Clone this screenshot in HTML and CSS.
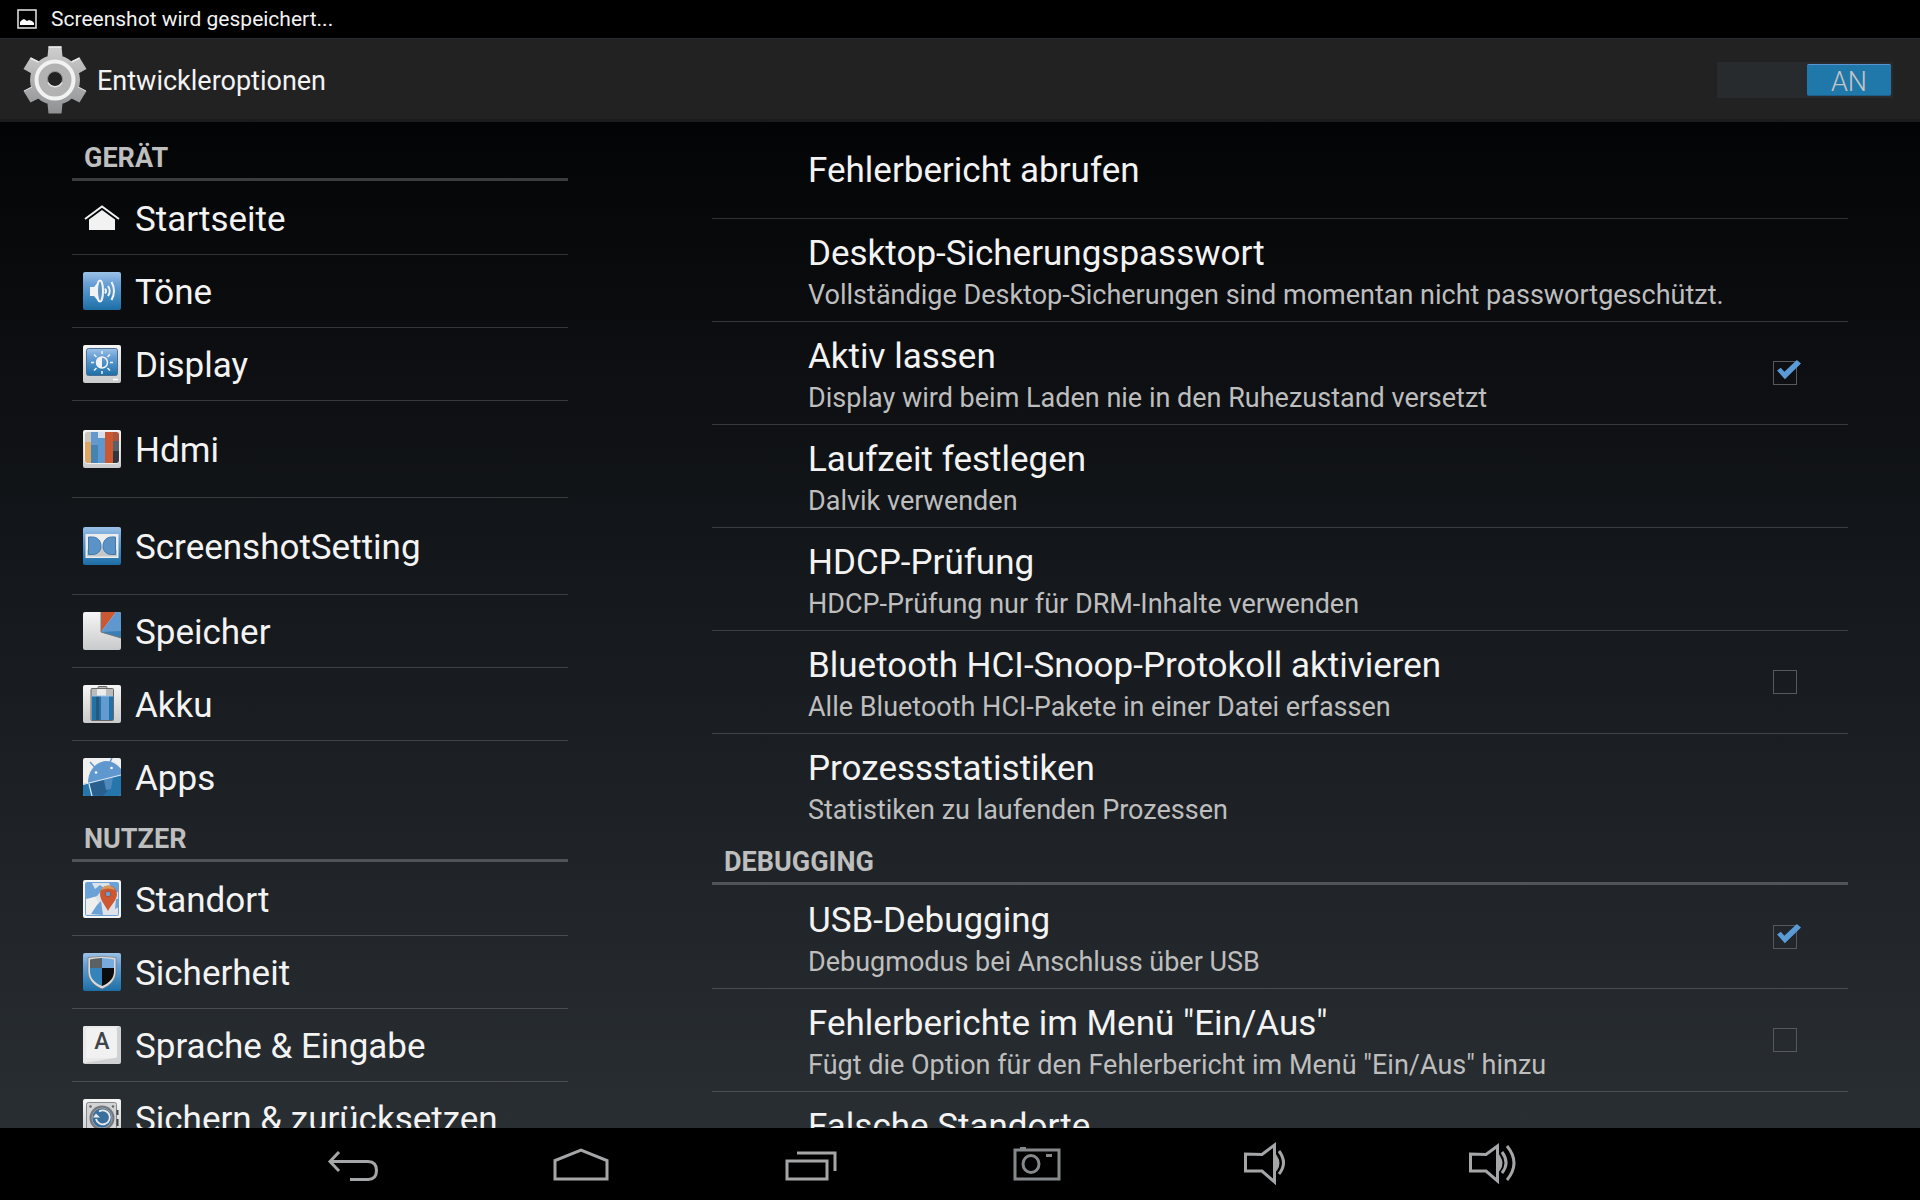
FILE: index.html
```html
<!DOCTYPE html>
<html lang="de">
  <head>
    <meta charset="UTF-8" />
    <meta name="viewport" content="width=device-width, initial-scale=1.0" />
    <title>Entwickleroptionen</title>
    <link rel="stylesheet" href="styles.css" />
  </head>
  <body>
    <!-- Status bar -->
    <div class="status-bar">
      <svg class="status-icon" viewBox="0 0 20 20" aria-hidden="true">
        <rect x="1" y="1" width="18" height="18" fill="none" stroke="#e8e8e8" stroke-width="1.5" />
        <path d="M3 16v-3l2-2 2-1 3 2 2-1 3 1 2 2v2z" fill="#fff" />
      </svg>
      <span>Screenshot wird gespeichert...</span>
    </div>

    <!-- Action bar -->
    <header class="action-bar">
      <svg class="gear" viewBox="0 0 64 68" aria-hidden="true">
        <defs>
          <linearGradient id="gearFill" x1="0" y1="0" x2="0" y2="68" gradientUnits="userSpaceOnUse">
            <stop offset="0" stop-color="#d0d0d0" />
            <stop offset="1" stop-color="#8f9092" />
          </linearGradient>
        </defs>
        <g fill="url(#gearFill)">
          <path d="M25.500 0.500h13l1 10h-15z" />
          <path d="M24.500 57.500h15l-1 10h-13z" />
          <path d="M56.500 11.500l7 11.500-9 5-7-12z" />
          <path d="M7.500 11.500l-7 11.500 9 5 7-12z" />
          <path d="M56.500 56.500l7-11.500-9-5-7 12z" />
          <path d="M7.500 56.500l-7-11.500 9-5 7 12z" />
          <circle cx="32" cy="34" r="25" />
        </g>
        <path d="M25.500 1h13M7.500 12l8 4M56.500 12l-8 4" stroke="#ececec" stroke-width="1.500" />
        <path d="M1 45l8-4M63 45l-8-4" stroke="#dcdcdc" />
        <circle cx="32" cy="34" r="18.500" fill="#b2b2b3" stroke="#f2f2f2" stroke-width="4" />
        <circle cx="32" cy="33" r="7.500" fill="#222" stroke="#8e9092" />
        <path d="M25 36.500a8 8 0 0 0 14 0" fill="none" stroke="#e6e6e6" stroke-width="1.500" />
      </svg>
      <h1>Entwickleroptionen</h1>
      <label class="switch">
        <input type="checkbox" role="switch" aria-label="Entwickleroptionen" checked />
        <span class="thumb">AN</span>
      </label>
    </header>

    <main class="content">
      <nav class="sidebar" aria-label="Einstellungen">
        <h2>GERÄT</h2>
        <ul>
          <li>
            <a href="#startseite">
              <svg viewBox="0 0 38 38" aria-hidden="true">
                <path d="M2 20L19 7.500 36 20" fill="none" stroke="#f2f2f2" stroke-width="2" />
                <path d="M6 20.500L19 11l13 9.500V31H6z" fill="#f2f2f2" />
              </svg>
              Startseite
            </a>
          </li>
          <li>
            <a href="#toene">
              <svg viewBox="0 0 38 38" aria-hidden="true">
                <defs>
                  <linearGradient id="blue" x1="0" y1="0" x2="0" y2="1">
                    <stop offset="0" stop-color="#9cc2e6" />
                    <stop offset="0.300" stop-color="#6aa0d6" />
                    <stop offset="0.700" stop-color="#3a86bd" />
                    <stop offset="1" stop-color="#1d6ea5" />
                  </linearGradient>
                  <linearGradient id="white" x1="0" y1="0" x2="0" y2="1">
                    <stop offset="0" stop-color="#f6f6f6" />
                    <stop offset="1" stop-color="#c9cacb" />
                  </linearGradient>
                </defs>
                <rect width="38" height="38" rx="2" fill="url(#blue)" />
                <path d="M7 15h4l5-6v21l-5-6H7z" fill="#f2f2f2" />
                <ellipse cx="17" cy="19" rx="3" ry="10.500" fill="#5b93c4" stroke="#f2f2f2" stroke-width="2" />
                <path d="M22 16.500q2 2.500 0 5M25 14q3.500 5 0 10M28.500 10q5 9 0 18" fill="none" stroke="#f2f2f2" stroke-width="2" />
              </svg>
              Töne
            </a>
          </li>
          <li>
            <a href="#display">
              <svg viewBox="0 0 38 38" aria-hidden="true">
                <rect width="38" height="38" rx="2" fill="url(#white)" />
                <rect x="3.500" y="3.500" width="31" height="27" rx="2" fill="url(#blue)" stroke="#4b6f90" />
                <circle cx="19" cy="17.500" r="5.500" fill="none" stroke="#f2f2f2" stroke-width="1.500" />
                <path d="M19 12a5.500 5.500 0 0 0 0 11z" fill="#f2f2f2" />
                <path d="M19 6v3M19 26v3M8 17.500h3M27 17.500h3M11 9.500l2.500 2.500M27 9.500L24.500 12M11 25.500l2.500-2.500M27 25.500L24.500 23" stroke="#f2f2f2" stroke-width="1.500" />
                <path d="M30 34.500h5" stroke="#fff" stroke-width="1.500" />
              </svg>
              Display
            </a>
          </li>
          <li class="tall">
            <a href="#hdmi">
              <svg viewBox="0 0 38 38" aria-hidden="true">
                <rect width="38" height="38" rx="2" fill="url(#white)" />
                <path d="M2 2h6v31H2z" fill="#dca562" />
                <path d="M2 2h6v10H2z" fill="#c9c6c0" />
                <path d="M8 2h7v31H8z" fill="#4583b3" />
                <path d="M8 2h7v13H8z" fill="#6399cc" />
                <path d="M15 2h7v31h-7z" fill="#5f98ce" />
                <path d="M15 2h7v6h-7z" fill="#d5e2ee" />
                <path d="M22 2h8v31h-8z" fill="#cc5833" />
                <path d="M30 2h6v31h-6z" fill="#30363c" />
                <path d="M30 2h6v9h-6z" fill="#a9563c" />
                <path d="M30 11h6v10h-6z" fill="#5a6068" />
                <rect x="1.500" y="1.500" width="35" height="32" rx="3" fill="none" stroke="#ededed" />
              </svg>
              Hdmi
            </a>
          </li>
          <li class="tall">
            <a href="#screenshot">
              <svg viewBox="0 0 38 38" aria-hidden="true">
                <rect width="38" height="38" rx="2" fill="url(#blue)" />
                <rect x="2.500" y="7" width="33" height="24" fill="#ededed" />
                <path d="M4 23l15-3 15 3v6.500H4z" fill="#c5c8cb" />
                <path d="M5.500 10h4c5 0 8.500 4 8.500 9s-3.500 8.500-8.500 8.500h-4z" fill="#5b93c9" stroke="#4078a8" />
                <path d="M32.500 10h-4c-5 0-8.500 4-8.500 9s3.500 8.500 8.500 8.500h4z" fill="#5b93c9" stroke="#4078a8" />
              </svg>
              ScreenshotSetting
            </a>
          </li>
          <li>
            <a href="#speicher">
              <svg viewBox="0 0 38 38" aria-hidden="true">
                <rect width="38" height="38" rx="2" fill="url(#white)" />
                <path d="M18 20V0h15z" fill="#cc5833" />
                <path d="M18 20L33 0h3q2 0 2 2v24z" fill="#5f97cf" />
                <path d="M18 20l20-1v7z" fill="#397fb5" />
                <path d="M18 0v20l20 6" fill="none" stroke="#777" />
              </svg>
              Speicher
            </a>
          </li>
          <li>
            <a href="#akku">
              <svg viewBox="0 0 38 38" aria-hidden="true">
                <rect width="38" height="38" rx="2" fill="url(#white)" />
                <rect x="15" y="1.500" width="9" height="3" rx="1" fill="#bbb" stroke="#666" />
                <rect x="8" y="3.500" width="22.500" height="32" rx="1" fill="#b9bbbd" stroke="#666" />
                <path d="M14 4h9v7h-9z" fill="#ececec" />
                <path d="M9 11h21v24H9z" fill="#2073a8" />
                <path d="M13 11h3v24h-3z" fill="#28567c" />
                <path d="M18 11h8v24h-8z" fill="#639bd0" />
                <path d="M9 11h21" stroke="#9cc2e6" />
              </svg>
              Akku
            </a>
          </li>
          <li>
            <a href="#apps">
              <svg viewBox="0 0 38 38" aria-hidden="true">
                <rect width="38" height="38" rx="2" fill="#f0f0f0" />
                <path d="M5 25C5 12 13 4 23 3c6 0 11 3 15 8v8z" fill="#5f97cf" />
                <path d="M0 26l6-1L38 17v19q0 2-2 2H2q-2 0-2-2z" fill="#2676ae" />
                <path d="M9 37L6 26l14-4 6 9-6 7z" fill="#295f8c" />
                <path d="M21 22l9-3-2 12-5 1z" fill="#5089bd" />
                <path d="M11.500 9L7 4M27 4l2-4" stroke="#5f97cf" stroke-width="1.500" />
                <path d="M0 26.500L38 17M6 26l3 12" stroke="#dfeaf5" stroke-width="1.200" />
                <circle cx="13" cy="14.500" r="1.300" fill="#fff" />
                <circle cx="28.500" cy="10" r="1.300" fill="#fff" />
              </svg>
              Apps
            </a>
          </li>
        </ul>

        <h2>NUTZER</h2>
        <ul>
          <li>
            <a href="#standort">
              <svg viewBox="0 0 38 38" aria-hidden="true">
                <rect width="38" height="38" rx="2" fill="#f4f4f4" />
                <rect x="2.500" y="2.500" width="33" height="33" rx="1" fill="#dde3e9" stroke="#6aa2d8" />
                <path d="M3 3h6l3 6 5-4 4 3-7 8-6 2-5 4z" fill="#6aa2d8" />
                <path d="M3 19l9-2 4 7-7 10H3z" fill="#eeeeee" />
                <path d="M8 34l6-9 4-4 2 14zM26 3h9v9h-5zM33 19h3v8l-4 2z" fill="#6aa2d8" />
                <path d="M25 31c3-6 9-11 9-17a8.500 8.500 0 0 0-17 0c0 6 5 11 8 17z" fill="#cc5833" />
                <path d="M18 10a8 8 0 0 1 14 0q-7-3-14 0z" fill="#d89a58" />
                <circle cx="25" cy="14" r="2.800" fill="#6aa2d8" stroke="#a84d30" />
              </svg>
              Standort
            </a>
          </li>
          <li>
            <a href="#sicherheit">
              <svg viewBox="0 0 38 38" aria-hidden="true">
                <rect width="38" height="38" rx="2" fill="url(#blue)" />
                <path d="M5 4.500q14-2.500 28 0v14C33 27 27 32.500 19 36 11 32.500 5 27 5 18.500z" fill="#dadada" stroke="#6f7478" stroke-width="0.700" />
                <path d="M7 6.500q6-1.500 12-1.500v10H7z" fill="#5b6063" />
                <path d="M31 6.500Q25 5 19 5v10h12z" fill="#77abdf" />
                <path d="M7 15h12v18C11 29.500 7 25 7 18z" fill="#3583bb" />
                <path d="M31 15H19v18c8-3.500 12-8 12-15z" fill="#0b0c0d" />
              </svg>
              Sicherheit
            </a>
          </li>
          <li>
            <a href="#sprache">
              <svg viewBox="0 0 38 38" aria-hidden="true">
                <rect width="38" height="38" rx="2" fill="#d0d1d2" />
                <path d="M0 2q0-2 2-2h34l-4 4v28L1 37q-1 0-1-1z" fill="#e9e9e9" />
                <rect x="3" y="2" width="31" height="30" rx="2" fill="#f1f1f1" />
                <text class="key" x="19" y="23" text-anchor="middle">A</text>
              </svg>
              Sprache &amp; Eingabe
            </a>
          </li>
          <li>
            <a href="#sichern">
              <svg viewBox="0 0 38 38" aria-hidden="true">
                <rect width="38" height="38" rx="2" fill="url(#white)" />
                <rect x="3.500" y="3.500" width="30" height="31" rx="2" fill="#d2d3d4" stroke="#85888b" />
                <circle cx="7.500" cy="7.500" r="1.300" fill="#666" />
                <circle cx="30" cy="7.500" r="1.300" fill="#666" />
                <circle cx="19" cy="19" r="12.500" fill="#74787c" />
                <circle cx="19" cy="19" r="10" fill="#396f9c" stroke="#9aa0a5" />
                <path d="M13 20a7 7 0 1 0 3-7.500" fill="none" stroke="#ececec" stroke-width="1.800" />
                <path d="M10 18.500l3-4 4 4z" fill="#ececec" />
                <path d="M34.500 11v5M34.500 20v7" stroke="#444" stroke-width="2" />
              </svg>
              Sichern &amp; zurücksetzen
            </a>
          </li>
        </ul>
      </nav>

      <section class="options">
        <ul>
          <li><a class="single" href="#fehlerbericht"><span class="title">Fehlerbericht abrufen</span></a></li>
          <li>
            <a href="#passwort">
              <span class="title">Desktop-Sicherungspasswort</span>
              <span class="summary">Vollständige Desktop-Sicherungen sind momentan nicht passwortgeschützt.</span>
            </a>
          </li>
          <li class="check-row">
            <label for="awake">
              <span class="title">Aktiv lassen</span>
              <span class="summary">Display wird beim Laden nie in den Ruhezustand versetzt</span>
            </label>
            <input type="checkbox" id="awake" checked />
          </li>
          <li>
            <a href="#laufzeit">
              <span class="title">Laufzeit festlegen</span>
              <span class="summary">Dalvik verwenden</span>
            </a>
          </li>
          <li>
            <a href="#hdcp">
              <span class="title">HDCP-Prüfung</span>
              <span class="summary">HDCP-Prüfung nur für DRM-Inhalte verwenden</span>
            </a>
          </li>
          <li class="check-row">
            <label for="snoop">
              <span class="title">Bluetooth HCI-Snoop-Protokoll aktivieren</span>
              <span class="summary">Alle Bluetooth HCI-Pakete in einer Datei erfassen</span>
            </label>
            <input type="checkbox" id="snoop" />
          </li>
          <li>
            <a href="#prozesse">
              <span class="title">Prozessstatistiken</span>
              <span class="summary">Statistiken zu laufenden Prozessen</span>
            </a>
          </li>
        </ul>

        <h2>DEBUGGING</h2>
        <ul>
          <li class="check-row">
            <label for="usb">
              <span class="title">USB-Debugging</span>
              <span class="summary">Debugmodus bei Anschluss über USB</span>
            </label>
            <input type="checkbox" id="usb" checked />
          </li>
          <li class="check-row">
            <label for="power">
              <span class="title">Fehlerberichte im Menü "Ein/Aus"</span>
              <span class="summary">Fügt die Option für den Fehlerbericht im Menü "Ein/Aus" hinzu</span>
            </label>
            <input type="checkbox" id="power" />
          </li>
          <li><a href="#standorte"><span class="title">Falsche Standorte</span></a></li>
        </ul>
      </section>
    </main>

    <!-- System buttons -->
    <footer class="nav-bar">
      <button type="button" aria-label="Zurück">
        <svg viewBox="0 0 60 48">
          <path d="M16 11L7 20.500 16 30M7 20.500h38q8.500 0 8.500 9T45 38.500H27" />
        </svg>
      </button>
      <button type="button" aria-label="Startbildschirm">
        <svg viewBox="0 0 60 48">
          <path d="M4 38V19.500L30 9l26 10.500V38z" />
        </svg>
      </button>
      <button type="button" aria-label="Letzte Apps">
        <svg viewBox="0 0 60 48">
          <path d="M8 20h40v18H8zM18 12h38v18" />
        </svg>
      </button>
      <button type="button" aria-label="Screenshot">
        <svg class="dim" viewBox="0 0 60 48">
          <path d="M8 9h44v29H8zM13 7.500h6M39 14.500h6" />
          <ellipse cx="24" cy="23" rx="8" ry="8.500" />
        </svg>
      </button>
      <button type="button" aria-label="Leiser">
        <svg viewBox="0 0 60 48">
          <path d="M10.500 13v17H27l12.500 11V4L27 13.500z" />
          <path d="M41 16q4 6.500 0 12zM44 10q9 12 0 23" />
        </svg>
      </button>
      <button type="button" aria-label="Lauter">
        <svg viewBox="0 0 60 48">
          <path d="M7.500 13v17H23l11.500 10V5L23 13.500z" />
          <path d="M36 16q4 6.500 0 12zM39 11q8 11 0 21M44 5q14 17 0 34" />
        </svg>
      </button>
    </footer>
  </body>
</html>
```
FILE: styles.css
```css
* {
  margin: 0;
  padding: 0;
  box-sizing: border-box;
}

body {
  display: flex;
  flex-direction: column;
  height: 100vh;
  overflow: hidden;
  background: #000;
  color: #f3f3f3;
  font-family: Roboto, sans-serif;
}

a {
  color: inherit;
  text-decoration: none;
}

ul {
  list-style: none;
}

/* Status bar */
.status-bar {
  display: flex;
  align-items: center;
  gap: 14px;
  height: 38px;
  padding-left: 17px;
  font-size: 21px;
}

.status-icon {
  width: 20px;
  height: 20px;
}

/* Action bar */
.action-bar {
  display: flex;
  align-items: center;
  height: 84px;
  padding: 2px 27px 0 23px;
  background: #222;
  border-top: 1px solid #272c30;
  border-bottom: 3px solid #1a1c1e;
}

.gear {
  width: 64px;
  height: 68px;
}

.action-bar h1 {
  margin-left: 10px;
  padding-top: 2px;
  font-size: 27px;
  font-weight: 400;
}

.switch {
  display: flex;
  justify-content: flex-end;
  position: relative;
  width: 176px;
  height: 36px;
  margin-left: auto;
  padding: 2px;
  background: #282b2e;
  cursor: pointer;
}

.switch input {
  position: absolute;
  inset: 0;
  opacity: 0;
}

.thumb {
  width: 84px;
  border-top: 1px solid #5b93cf;
  border-bottom: 1px solid #1c5f88;
  border-radius: 2px;
  background: #2077aa;
  color: #c4c4c4;
  font-size: 27px;
  font-weight: 300;
  line-height: 34px;
  text-align: center;
}

/* Two panes */
.content {
  display: flex;
  flex: 1;
  gap: 144px;
  min-height: 0;
  padding: 0 72px;
  overflow: hidden;
  background: linear-gradient(#030405, #0d0f12 25%, #181c20 55%, #292e32);
}

h2 {
  height: 48px;
  padding-left: 12px;
  border-bottom: 3px solid rgba(255, 255, 255, 0.22);
  margin-bottom: 1px;
  color: #bebebe;
  font-size: 27px;
  font-weight: 700;
  line-height: 51px;
}

.content li {
  border-bottom: 1px solid rgba(255, 255, 255, 0.17);
}

.content li:last-child {
  border-bottom-color: transparent;
}

.sidebar {
  flex: 0 0 496px;
  padding-top: 11px;
}

.sidebar a {
  display: flex;
  align-items: center;
  gap: 14px;
  height: 72px;
  padding: 2px 0 0 11px;
  font-size: 35px;
  white-space: nowrap;
}

.sidebar .tall a {
  height: 96px;
}

.sidebar svg {
  flex: none;
  width: 38px;
  height: 38px;
  margin-bottom: 2px;
}

.key {
  fill: #3f444a;
  font-size: 23px;
  font-weight: 500;
}

.options {
  flex: 1;
}

.options a,
.options label {
  display: block;
  flex: 1;
  height: 102px;
  padding: 14px 0 0 96px;
}

.options a.single {
  height: 96px;
  padding-top: 28px;
}

.title {
  display: block;
  font-size: 35px;
  line-height: 42px;
}

.summary {
  display: block;
  color: #bebebe;
  font-size: 27px;
  line-height: 40px;
}

.check-row {
  display: flex;
  align-items: center;
  padding-right: 51px;
}

.check-row input {
  appearance: none;
  position: relative;
  width: 24px;
  height: 24px;
  border: 1px solid #55595c;
}

.check-row input:checked::after {
  content: "";
  position: absolute;
  right: -5px;
  top: -3px;
  width: 26px;
  height: 22px;
  background: #5a9bd5;
  clip-path: polygon(8% 52%, 22% 40%, 36% 58%, 84% 4%, 100% 20%, 38% 92%);
}

/* System buttons */
.nav-bar {
  display: flex;
  height: 72px;
  padding: 2px 313px 0 239px;
  background: #000;
}

.nav-bar button {
  display: flex;
  flex: 1;
  align-items: center;
  justify-content: center;
  border: none;
  background: none;
}

.nav-bar svg {
  width: 60px;
  height: 48px;
  fill: none;
  stroke: #a5a6a8;
  stroke-width: 3;
}

.nav-bar svg.dim {
  stroke: #86898c;
}
```
